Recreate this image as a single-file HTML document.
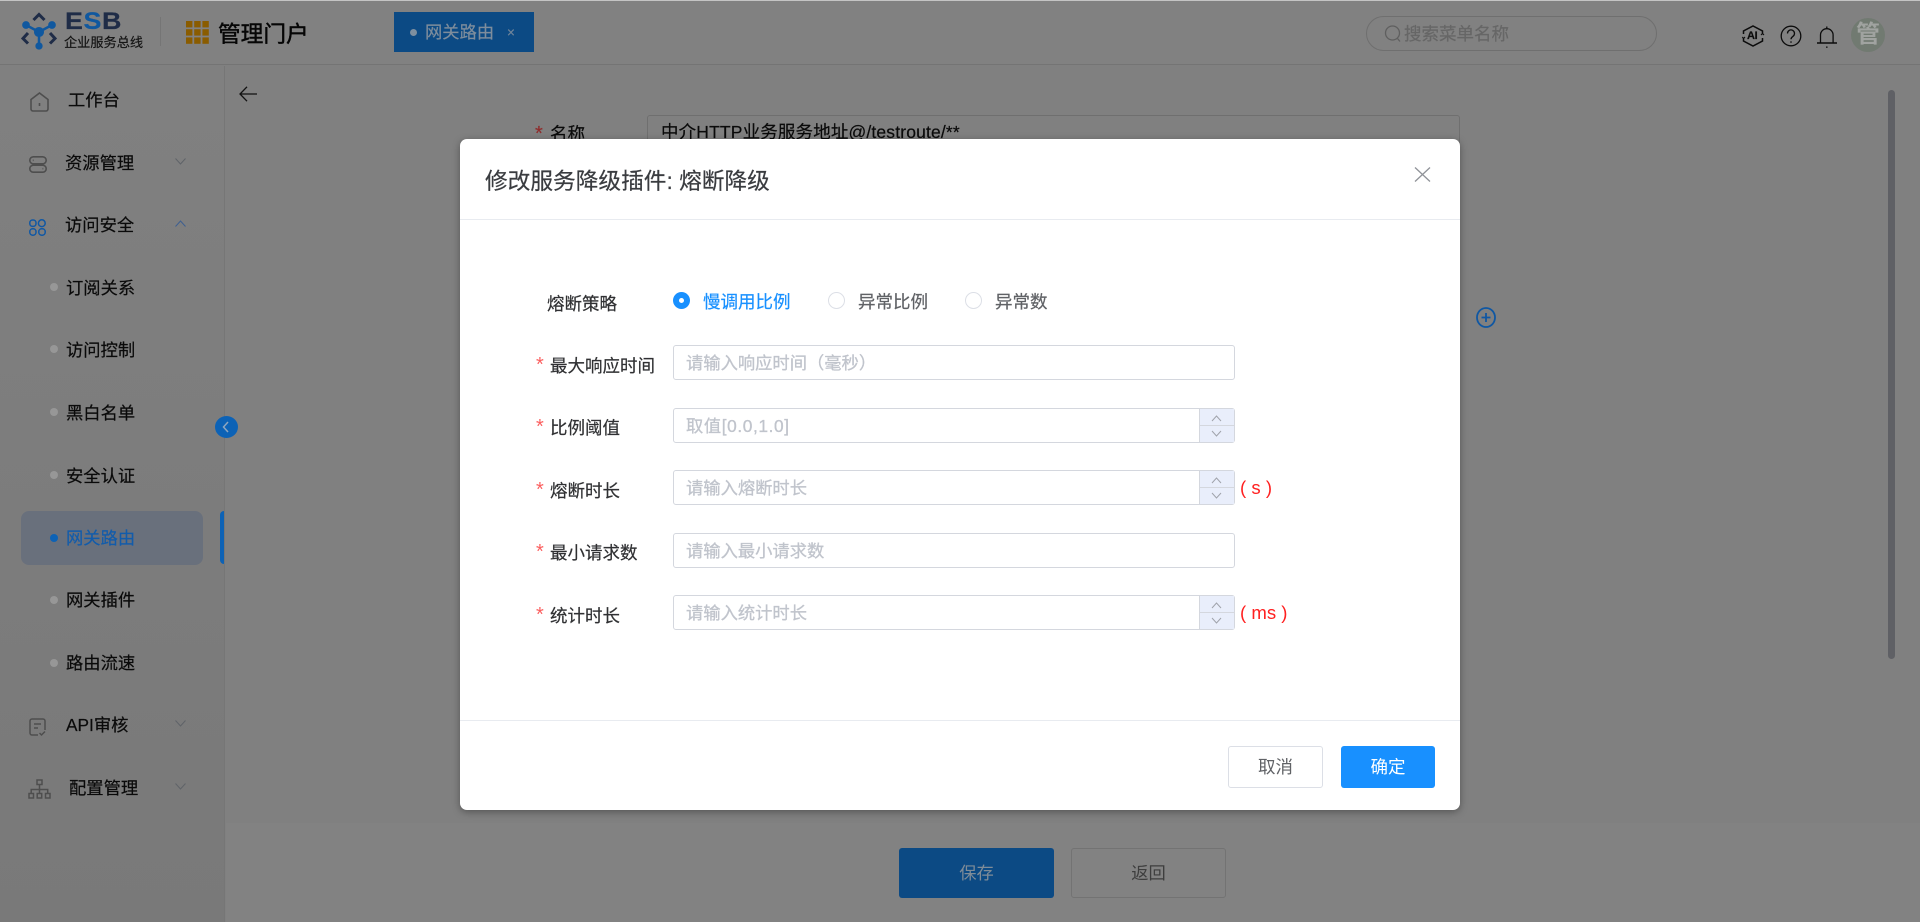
<!DOCTYPE html>
<html lang="zh-CN"><head><meta charset="utf-8"><title>网关路由</title>
<style>
*{box-sizing:border-box}
html,body{margin:0;padding:0;width:1920px;height:922px;overflow:hidden;background:#808080}
body{position:relative;font-family:"Liberation Sans","Noto Sans CJK SC",sans-serif;font-size:17.3px;color:#0a0a0a}
.a,.t{position:absolute}
.t{white-space:nowrap;line-height:24px;height:24px;-webkit-text-stroke:.2px currentColor}
svg{position:absolute;overflow:visible}
.dot{position:absolute;width:8px;height:8px;border-radius:50%;left:50px;background:#979797}
#modal{position:absolute;left:460px;top:139px;width:1000px;height:671px;background:#fff;border-radius:7px;box-shadow:0 2px 8px rgba(0,0,0,.35);overflow:hidden;color:#303133}
#in{position:absolute;left:-1px;top:-1px;width:1001px;height:672px;font-size:17.5px}
#modal .t{color:#303133}
.inp{position:absolute;left:214px;width:562px;height:35px;border:1px solid #d4d7de;border-radius:3px;background:#fff}
.ph{position:absolute;left:12px;top:5px;line-height:24px;color:#c0c4cc;white-space:nowrap;font-size:17.3px;-webkit-text-stroke:.3px #c0c4cc}
.st{position:absolute;right:0;top:0;width:35px;height:33px;background:#e9eefb;border-left:1px solid #d4d7de}
.st i{position:absolute;left:0;right:0;top:16px;height:1px;background:#d4d7de}
.rq{position:absolute;left:77px;color:#fb5f5f;font-size:20px;line-height:24px}
.rad{position:absolute;width:17px;height:17px;border-radius:50%;border:1px solid #dcdfe6;background:#fff;top:154px}
.btn{position:absolute;border-radius:3px;text-align:center}
</style></head><body>

<div class="a" style="left:0;top:0;width:1920px;height:1px;background:#c4c4c4"></div>
<div class="a" style="left:0;top:1px;width:1920px;height:64px;background:#818181;border-bottom:1px solid #747474"></div>

<!-- logo -->
<svg style="left:0;top:0" width="160" height="64" viewBox="0 0 160 64">
<g fill="none" stroke="#1f2c47" stroke-width="3">
<path d="M33.500 20L39 14.500l5.500 5.500"/>
<path d="M28 33l-5 5.500 5 5"/>
<path d="M50 33l5 5.500-5 5"/>
</g>
<g stroke="#10589f" stroke-width="2.500" fill="#10589f">
<path d="M26 25L39 32 52 25M39 32V46" fill="none"/>
<circle cx="26" cy="25" r="2.600"/><circle cx="52" cy="25" r="2.600"/>
<circle cx="39" cy="32" r="3.800"/><circle cx="39" cy="46" r="2.400"/>
</g>
</svg>
<div class="t" style="left:65px;top:10px;font-size:24px;font-weight:700;line-height:24px;letter-spacing:.5px;color:#1f2c47;transform:scaleX(1.120);transform-origin:0 0">E<span style="color:#10589f">S</span>B</div>
<div class="t" style="left:64px;top:31px;font-size:13.200px;color:#141414">企业服务总线</div>
<div class="a" style="left:160px;top:17px;width:1px;height:29px;background:#757575"></div>

<svg style="left:186px;top:21px" width="23" height="23" viewBox="0 0 23 23" fill="#8a5c00">
<rect x="0" y="0" width="6.400" height="6.400"/><rect x="8.200" y="0" width="6.400" height="6.400"/><rect x="16.400" y="0" width="6.400" height="6.400"/>
<rect x="0" y="8.200" width="6.400" height="6.400"/><rect x="8.200" y="8.200" width="6.400" height="6.400"/><rect x="16.400" y="8.200" width="6.400" height="6.400"/>
<rect x="0" y="16.400" width="6.400" height="6.400"/><rect x="8.200" y="16.400" width="6.400" height="6.400"/><rect x="16.400" y="16.400" width="6.400" height="6.400"/>
</svg>
<div class="t" style="left:218px;top:22px;font-size:22.700px;-webkit-text-stroke:.45px #060606;color:#060606">管理门户</div>

<!-- tab -->
<div class="a" style="left:394px;top:12px;width:140px;height:40px;background:#0c4a84"></div>
<div class="a" style="left:410px;top:29px;width:7px;height:7px;border-radius:50%;background:#7e8f9f"></div>
<div class="t" style="left:425px;top:20px;color:#7e8d9c">网关路由</div>
<div class="t" style="left:507px;top:21px;font-size:13.500px;color:#71859a">×</div>

<!-- search -->
<div class="a" style="left:1366px;top:16px;width:291px;height:35px;border:1px solid #6f6f6f;border-radius:18px"></div>
<svg style="left:1384px;top:24px" width="18" height="20" viewBox="0 0 18 20" fill="none" stroke="#5f5f5f" stroke-width="1.300"><circle cx="8.500" cy="9" r="7"/><path d="M13.500 14.500l2.500 3"/></svg>
<div class="t" style="left:1404px;top:22px;font-size:17.500px;color:#666">搜索菜单名称</div>

<!-- top right icons -->
<svg style="left:1742px;top:25px" width="22" height="22" viewBox="0 0 22 22" fill="none" stroke="#0c0c0c" stroke-width="1.500">
<path d="M1.500 9V6L11 1l9.500 5v2.500M20.500 13v3L11 21l-9.500-5v-2.500"/>
<path d="M.3 12l1.200 1.500L3 12M19 10l1.500-1.500L22 10" stroke-width="1.100"/>
</svg>
<div class="t" style="left:1747px;top:24px;width:14px;font-size:11px;font-weight:700;letter-spacing:-.3px;color:#0c0c0c">AI</div>
<svg style="left:1780px;top:25px" width="22" height="22" viewBox="0 0 22 22" fill="none" stroke="#0c0c0c" stroke-width="1.300">
<circle cx="11" cy="11" r="9.800"/><path d="M7.500 8.500a3.500 3.500 0 1 1 5.500 2.800c-1.300.9-2 1.500-2 3"/><path d="M11 16.300v1.500"/>
</svg>
<svg style="left:1816px;top:25px" width="22" height="24" viewBox="0 0 22 24" fill="none" stroke="#0c0c0c" stroke-width="1.300">
<path d="M4.500 17.500V10a6.300 6.300 0 0 1 12.600 0v7.500"/><path d="M1 18h20" stroke-width="1.500"/><path d="M10.800 21.500v1.300" stroke-width="1.500"/><path d="M10.800 1.500v1.800"/>
</svg>
<div class="a" style="left:1851px;top:18px;width:34px;height:34px;border-radius:50%;background:#717a71;overflow:hidden"></div>
<div class="t" style="left:1856px;top:23px;font-size:24px;font-weight:700;color:#a0a3a0;-webkit-text-stroke:0">管</div>

<!-- sidebar -->
<div class="a" style="left:0;top:66px;width:225px;height:856px;background:linear-gradient(#808080,#797979);border-right:1px solid #767676"></div>

<svg style="left:30px;top:92px" width="19" height="20" viewBox="0 0 19 20" fill="none" stroke="#4e4e4e" stroke-width="1.600"><path d="M1 7.500L9.500 1 18 7.500V17a2 2 0 0 1-2 2H3a2 2 0 0 1-2-2z"/><path d="M9.500 11v3"/></svg>
<div class="t" style="left:68px;top:88px">工作台</div>

<svg style="left:29px;top:156px" width="18" height="17" viewBox="0 0 18 17" fill="none" stroke="#4e4e4e" stroke-width="1.600"><rect x=".8" y=".8" width="16.400" height="7" rx="3.500"/><rect x=".8" y="9.200" width="16.400" height="7" rx="3.500"/><path d="M3.800 4.300h.8M13.500 12.700h.8"/></svg>
<div class="t" style="left:65px;top:151px">资源管理</div>
<svg style="left:175px;top:158px" width="11" height="7" viewBox="0 0 11 7" fill="none" stroke="#5f6368" stroke-width="1"><path d="M.5.500l5 5.500 5-5.500"/></svg>

<svg style="left:29px;top:219px" width="17" height="17" viewBox="0 0 17 17" fill="none" stroke="#1058a5" stroke-width="1.500"><rect x=".8" y="1" width="6.200" height="6.400" rx="2.800"/><circle cx="12.800" cy="4.200" r="3.400"/><rect x=".8" y="9.800" width="6.200" height="6.400" rx="2.800"/><rect x="9.800" y="9.800" width="6.400" height="6.400" rx="2.800"/></svg>
<div class="t" style="left:65px;top:213px">访问安全</div>
<svg style="left:175px;top:220px" width="11" height="7" viewBox="0 0 11 7" fill="none" stroke="#3e5f90" stroke-width="1"><path d="M.5 6.500l5-5.500 5 5.500"/></svg>

<div class="dot" style="top:283px"></div><div class="t" style="left:66px;top:276px">订阅关系</div>
<div class="dot" style="top:345px"></div><div class="t" style="left:66px;top:338px">访问控制</div>
<div class="dot" style="top:408px"></div><div class="t" style="left:66px;top:401px">黑白名单</div>
<div class="dot" style="top:471px"></div><div class="t" style="left:66px;top:464px">安全认证</div>

<div class="a" style="left:21px;top:511px;width:182px;height:54px;background:#69707c;border-radius:8px"></div>
<div class="dot" style="top:534px;background:#0d62b5"></div><div class="t" style="left:66px;top:526px;color:#125cab">网关路由</div>
<div class="a" style="left:220px;top:511px;width:4px;height:53px;background:#0d62b5;border-radius:4px 0 0 4px"></div>

<div class="dot" style="top:596px"></div><div class="t" style="left:66px;top:588px">网关插件</div>
<div class="dot" style="top:659px"></div><div class="t" style="left:66px;top:651px">路由流速</div>

<svg style="left:29px;top:718px" width="17" height="18" viewBox="0 0 17 18" fill="none" stroke="#4e4e4e" stroke-width="1.500"><path d="M9 17H3a2 2 0 0 1-2-2V3a2 2 0 0 1 2-2h11a2 2 0 0 1 2 2v9"/><path d="M5 6h7M5 10h4M10.500 15l2 2 3.500-3.500"/></svg>
<div class="t" style="left:66px;top:713px">API审核</div>
<svg style="left:175px;top:720px" width="11" height="7" viewBox="0 0 11 7" fill="none" stroke="#5f6368" stroke-width="1"><path d="M.5.500l5 5.500 5-5.500"/></svg>

<svg style="left:28px;top:779px" width="23" height="20" viewBox="0 0 23 20" fill="none" stroke="#4e4e4e" stroke-width="1.500"><rect x="9" y="1" width="5" height="4.500"/><rect x="1" y="14.500" width="4.500" height="4.500"/><rect x="9.200" y="14.500" width="4.500" height="4.500"/><rect x="17.500" y="14.500" width="4.500" height="4.500"/><path d="M11.500 5.500v9M3.200 14.500v-4h16.500v4"/></svg>
<div class="t" style="left:69px;top:776px">配置管理</div>
<svg style="left:175px;top:783px" width="11" height="7" viewBox="0 0 11 7" fill="none" stroke="#5f6368" stroke-width="1"><path d="M.5.500l5 5.500 5-5.500"/></svg>

<div class="a" style="left:215px;top:416px;width:23px;height:22px;border-radius:50%;background:#0c62b6"></div>
<svg style="left:221px;top:421px" width="10" height="12" viewBox="0 0 10 12" fill="none" stroke="#8fa6bf" stroke-width="1.500"><path d="M7 1L2.500 6 7 11"/></svg>

<!-- main bg -->
<svg style="left:239px;top:86px" width="18" height="16" viewBox="0 0 18 16" fill="none" stroke="#111" stroke-width="1.300"><path d="M8 .8L1 8l7 7.200M1 8h17"/></svg>

<div class="t" style="left:535px;top:122px;font-size:20px;color:#8f2c2c">*</div>
<div class="t" style="left:550px;top:122px;font-size:17.500px">名称</div>
<div class="a" style="left:647px;top:115px;width:813px;height:40px;border:1px solid #6f6f6f;border-radius:3px"></div>
<div class="t" style="left:661px;top:120px;font-size:17.500px;letter-spacing:.15px">中介HTTP业务服务地址@/testroute/**</div>

<svg style="left:1476px;top:307px" width="20" height="21" viewBox="0 0 20 21" fill="none" stroke="#0f57a3" stroke-width="1.800"><ellipse cx="10" cy="10.500" rx="9" ry="9.500"/><path d="M5.500 10.500h9M10 6v9"/></svg>

<div class="a" style="left:1888px;top:90px;width:7px;height:569px;background:#5f6065;border-radius:4px"></div>

<!-- bottom bar -->
<div class="a" style="left:226px;top:823px;width:1694px;height:99px;background:#828282"></div>
<div class="btn" style="left:899px;top:848px;width:155px;height:50px;background:#0c4a84;color:#7f8c98;line-height:50px">保存</div>
<div class="btn" style="left:1071px;top:848px;width:155px;height:50px;border:1px solid #737373;color:#3e3e3e;line-height:48px">返回</div>

<!-- modal -->
<div id="modal"><div id="in">
<div class="t" style="left:26px;top:27px;font-size:22.700px;line-height:32px;height:32px;color:#3a3c40">修改服务降级插件: 熔断降级</div>
<svg style="left:955px;top:29px" width="17" height="15" viewBox="0 0 17 15" fill="none" stroke="#909399" stroke-width="1.300"><path d="M1 .5l15 14M16 .5l-15 14"/></svg>
<div class="a" style="left:0;top:81px;width:1001px;height:1px;background:#e8ebf0"></div>

<div class="t" style="left:88px;top:154px">熔断策略</div>
<div class="rad" style="left:214px;background:#1890ff;border:0"></div>
<div class="a" style="left:220px;top:160px;width:5px;height:5px;border-radius:50%;background:#fff"></div>
<div class="t" style="left:244px;top:152px;color:#1890ff">慢调用比例</div>
<div class="rad" style="left:369px"></div>
<div class="t" style="left:399px;top:152px;color:#606266">异常比例</div>
<div class="rad" style="left:506px"></div>
<div class="t" style="left:536px;top:152px;color:#606266">异常数</div>

<div class="rq" style="top:215px">*</div><div class="t" style="left:91px;top:216px">最大响应时间</div>
<div class="inp" style="top:207px"><span class="ph">请输入响应时间（毫秒）</span></div>

<div class="rq" style="top:277px">*</div><div class="t" style="left:91px;top:278px">比例阈值</div>
<div class="inp" style="top:270px"><span class="ph" style="letter-spacing:.6px">取值[0.0,1.0]</span><div class="st"><i></i></div></div>

<div class="rq" style="top:340px">*</div><div class="t" style="left:91px;top:341px">熔断时长</div>
<div class="inp" style="top:332px"><span class="ph">请输入熔断时长</span><div class="st"><i></i></div></div>
<div class="t" style="left:781px;top:338px;font-size:18.600px;color:#ff2020;-webkit-text-stroke:0">( s )</div>

<div class="rq" style="top:402px">*</div><div class="t" style="left:91px;top:403px">最小请求数</div>
<div class="inp" style="top:395px"><span class="ph">请输入最小请求数</span></div>

<div class="rq" style="top:465px">*</div><div class="t" style="left:91px;top:466px">统计时长</div>
<div class="inp" style="top:457px"><span class="ph">请输入统计时长</span><div class="st"><i></i></div></div>
<div class="t" style="left:781px;top:463px;font-size:18.600px;color:#ff2020;-webkit-text-stroke:0">( ms )</div>

<svg style="left:747px;top:270px" width="20" height="235" viewBox="0 0 20 235" fill="none" stroke="#a0a3ab" stroke-width="1">
<path d="M6 13l4.500-5 4.500 5M6 23l4.500 5 4.500-5"/>
<path d="M6 75l4.500-5 4.500 5M6 85l4.500 5 4.500-5"/>
<path d="M6 200l4.500-5 4.500 5M6 210l4.500 5 4.500-5"/>
</svg>

<div class="a" style="left:0;top:582px;width:1001px;height:1px;background:#e8ebf0"></div>
<div class="btn" style="left:769px;top:608px;width:95px;height:42px;border:1px solid #dcdfe6;color:#606266;line-height:40px">取消</div>
<div class="btn" style="left:882px;top:608px;width:94px;height:42px;background:#1890ff;color:#fff;line-height:42px">确定</div>
</div></div>

</body></html>
